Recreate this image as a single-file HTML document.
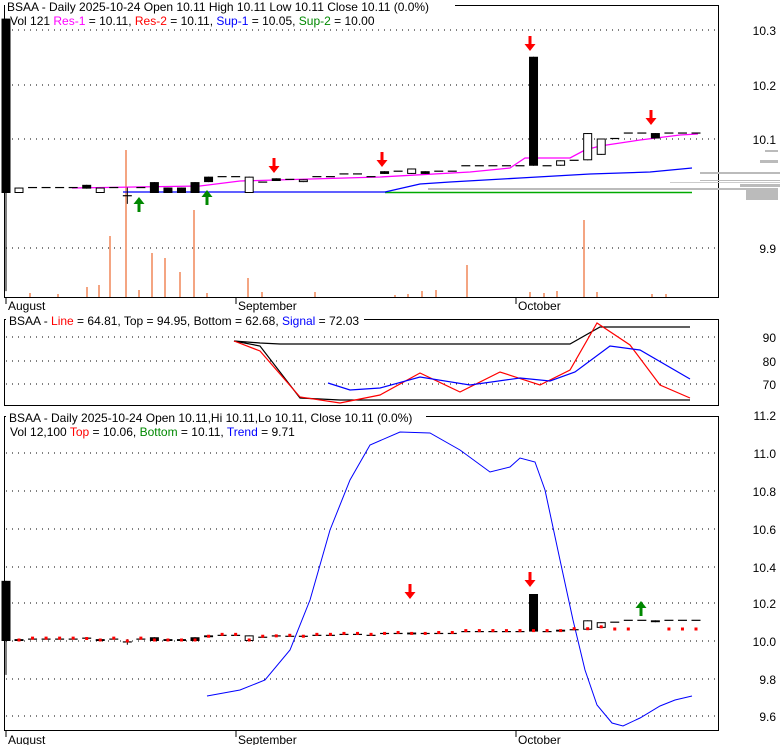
<!DOCTYPE html><html><head><meta charset="utf-8"><style>body{margin:0;background:#fff}svg{display:block;font-family:"Liberation Sans",sans-serif}</style></head><body>
<svg id="s" width="780" height="745" xmlns="http://www.w3.org/2000/svg"></svg>
<script>
var s=document.getElementById('s'),h='';
function L(x1,y1,x2,y2,c,w,d){h+=`<line x1="${x1}" y1="${y1}" x2="${x2}" y2="${y2}" stroke="${c}" stroke-width="${w||1}"${d?` stroke-dasharray="${d}"`:''}/>`;}
function R(x,y,w,hh,f,st){h+=`<rect x="${x}" y="${y}" width="${w}" height="${hh}" fill="${f}"${st?` stroke="${st}"`:''}/>`;}
function T(x,y,t,sz,anc){h+=`<text x="${x}" y="${y}" font-size="${sz||12}"${anc?` text-anchor="${anc}"`:''}>${t}</text>`;}
function P(pts,c,w){h+=`<polyline points="${pts}" fill="none" stroke="${c}" stroke-width="${w||1}"/>`;}
function dn(x,y){h+=`<path d="M${x-1.5} ${y-14}h3v8h4l-5.5 7l-5.5-7h4z" fill="#f00"/>`;}
function up(x,y){h+=`<path d="M${x-1.5} ${y+14}h3v-8h4l-5.5-7l-5.5 7h4z" fill="#080"/>`;}
// frames
R(4.5,5.5,714,292,'none','#000');R(4.5,319.5,714,86,'none','#000');R(4.5,416.5,714,314,'none','#000');
// grids
[30,85,139,248].forEach(y=>L(6,y,716,y,'#000',1,'1 5'));
[337,361,384].forEach(y=>L(6,y,716,y,'#000',1,'1 5'));
[453,491,529,567,603,641,679,716].forEach(y=>L(6,y,716,y,'#000',1,'1 5'));
// axis labels
[[30,'10.3'],[85,'10.2'],[139,'10.1'],[193,'10.0'],[248,'9.9']].forEach(a=>T(776,a[0]+5,a[1],12,'end'));
[[337,'90'],[361,'80'],[384,'70']].forEach(a=>T(776,a[0]+5,a[1],12,'end'));
[[415,'11.2'],[453,'11.0'],[491,'10.8'],[529,'10.6'],[567,'10.4'],[603,'10.2'],[641,'10.0'],[679,'9.8'],[716,'9.6']].forEach(a=>T(776,a[0]+5,a[1],12,'end'));
[[8,'August'],[238,'September'],[518,'October']].forEach(a=>{L(a[0]-2,298,a[0]-2,304,'#000');T(a[0],310,a[1]);L(a[0]-2,731,a[0]-2,737,'#000');T(a[0],744,a[1]);});
// volume bars
[[87,287],[99,285],[110,236],[126,150],[139,290],[152,253],[165,258],[180,272],[194,210],[207,293],[248,278],[262,292],[315,292],[395,295],[408,294],[422,291],[436,290],[467,265],[530,292],[544,293],[557,291],[584,220],[597,292],[652,294],[666,294],[30,293],[58,294]].forEach(v=>R(v[0]-1,v[1],2,297-v[1],'#f4a582'));
// gray profile
R(746,188,32,12,'#bbb');R(700,172,80,2,'#bbb');R(428,188,320,2,'#bbb');R(740,184,40,3,'#bbb');R(760,160,18,3,'#bbb');R(765,150,13,2,'#bbb');R(700,180,80,1,'#bbb');R(670,182,110,1,'#ccc');
// lines top
L(385,192.5,692,192.5,'#0a0',1.5);
P('123,192 385,192 420,184 450,182 520,178 590,174 650,172 692,168','#00f',1.3);
P('72,188 200,186 240,181 380,177 470,172 510,168 525,158 570,158 585,150 600,146 640,140 680,135 698,134','#f0f',1.3);
// candles
var d=[[10.32,10.00,10.32,9.82],[10,10.01],[10.01,10.01],[10.01,10.01],[10.01,10.01],[10.01,10.01],[10.015,10.008],[10.00,10.01],[10.01,10.01],[9.995,9.995,10.01,9.98],[10.01,10.01],[10.02,10.0],[10.01,10.0],[10.01,10.0],[10.02,10.0],[10.03,10.02],[10.03,10.03],[10.03,10.03],[10.0,10.03],[10.02,10.02],[10.027,10.022],[10.025,10.025],[10.02,10.025],[10.03,10.03],[10.03,10.03],[10.035,10.035],[10.035,10.035],[10.03,10.03],[10.04,10.035],[10.04,10.04],[10.035,10.045],[10.04,10.035],[10.04,10.04],[10.04,10.04],[10.05,10.05],[10.05,10.05],[10.05,10.05],[10.05,10.05],[10.05,10.05],[10.25,10.05],[10.05,10.05],[10.05,10.06],[10.06,10.06],[10.06,10.11],[10.07,10.10],[10.10,10.10],[10.11,10.11],[10.11,10.11],[10.11,10.10],[10.11,10.11],[10.11,10.11],[10.11,10.11]];
function draw(y0,k,bw){d.forEach((c,i)=>{var x=i==0?6:19+(i-1)*13.54,o=c[0],cl=c[1],hi=c[2]||Math.max(o,cl),lo=c[3]||Math.min(o,cl);var Y=p=>y0-(p-10)*k;
L(x,Y(hi),x,Y(lo),'#000');var t=Math.min(Y(o),Y(cl)),b=Math.max(Y(o),Y(cl));
if(b-t<1.5){L(x-bw/2,t,x+bw/2,t,'#000',1.2);}else if(o>cl)R(x-bw/2,t,bw,b-t,'#000');else R(x-bw/2+.5,t+.5,bw-1,b-t-1,'#fff','#000');});}
draw(193,545,9);
dn(274,172);dn(382,166);dn(530,50);dn(651,124);up(139,198);up(207,191);
// middle
P('234,341 260,343 280,344 570,344 600,327 690,327','#000',1.2);
P('234,341 260,346 300,398 340,400 690,400','#000',1.2);
P('234,341 260,351 300,397 340,403 380,395 420,373 460,392 500,372 540,385 570,370 597,323 630,345 660,385 690,398','#f00',1.2);
P('328,383 350,390 380,388 420,377 470,385 520,378 550,381 575,372 610,346 640,350 690,379','#00f',1.2);
// bottom
P('207,696 240,690 265,680 290,650 310,600 330,530 350,480 370,445 400,432 430,433 460,450 490,472 510,467 520,458 535,462 545,490 560,560 573,620 585,670 597,705 612,723 623,726 640,718 660,706 675,700 692,696','#00f',1);
draw(641,188,9);
d.forEach((c,i)=>{if(i<1)return;var x=19+(i-1)*13.54;var y=i>44?629:641-(Math.min(c[0],c[1])-10)*188-1;if(i!=48&&i!=47)R(x-1.5,y-1.5,3,3,'#f00');});
dn(410,598);dn(530,586);up(641,602);
// labels
h+=`<rect x="5" y="0" width="450" height="13" fill="#fff"/>`;
T(7,11,'BSAA - Daily 2025-10-24 Open 10.11  High 10.11  Low 10.11  Close 10.11 (0.0%)');
h+=`<text x="10" y="25" font-size="12">Vol 121 <tspan fill="#f0f">Res-1</tspan> = 10.11, <tspan fill="#f00">Res-2</tspan> = 10.11, <tspan fill="#00f">Sup-1</tspan> = 10.05, <tspan fill="#080">Sup-2</tspan> = 10.00</text>`;
h+=`<rect x="6" y="313" width="358" height="12" fill="#fff"/><text x="9" y="325" font-size="12">BSAA - <tspan fill="#f00">Line</tspan> = 64.81, Top = 94.95, Bottom = 62.68, <tspan fill="#00f">Signal</tspan> = 72.03</text>`;
h+=`<rect x="6" y="410" width="420" height="13" fill="#fff"/><text x="9" y="422" font-size="12">BSAA - Daily 2025-10-24 Open 10.11,Hi 10.11,Lo 10.11, Close 10.11 (0.0%)</text>`;
h+=`<text x="10" y="436" font-size="12">Vol 12,100 <tspan fill="#f00">Top</tspan> = 10.06, <tspan fill="#080">Bottom</tspan> = 10.11, <tspan fill="#00f">Trend</tspan> = 9.71</text>`;
s.innerHTML=h;
</script></body></html>
